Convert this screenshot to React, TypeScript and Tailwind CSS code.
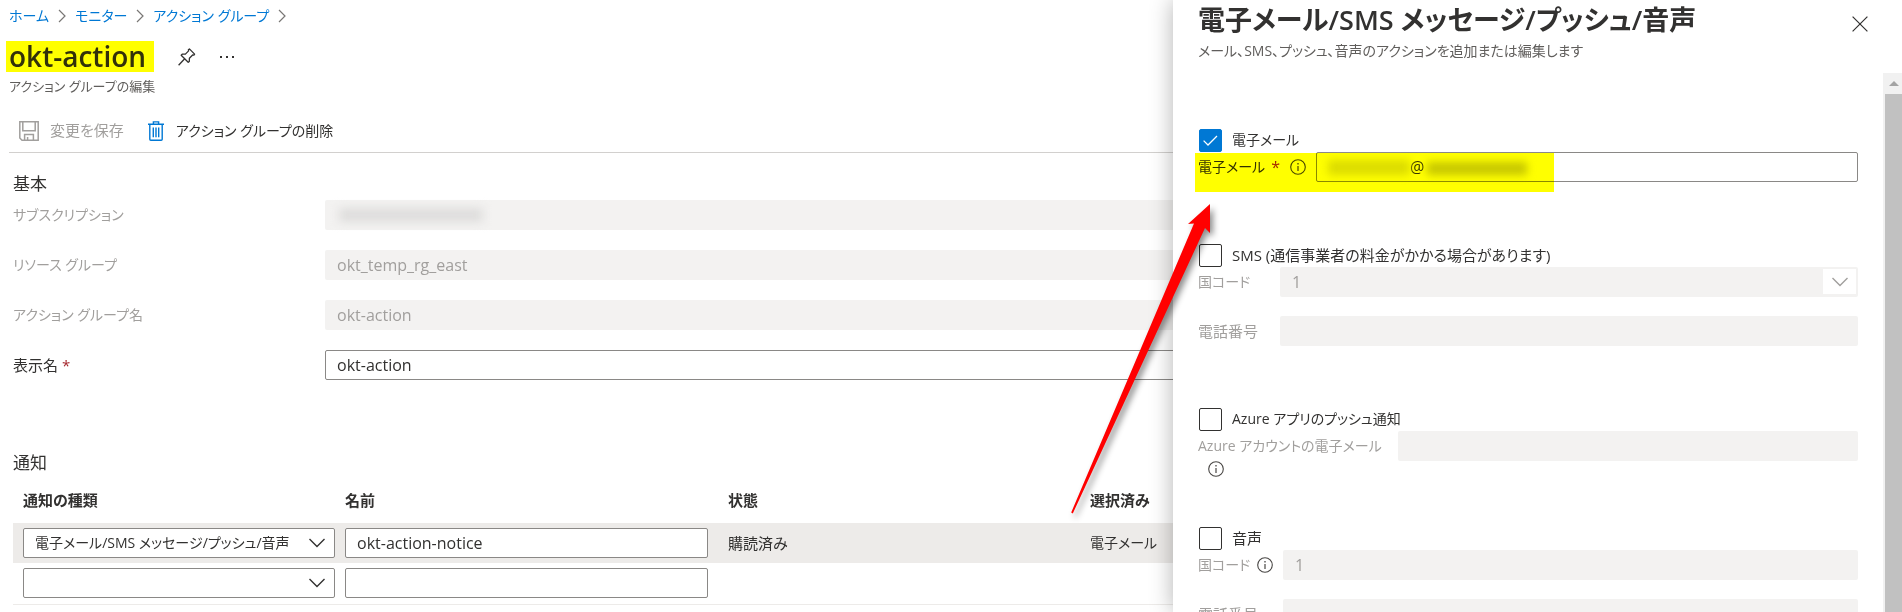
import type { ReactNode } from "react";

const fontStack =
  "font-['Open_Sans','Noto_Sans_CJK_JP',sans-serif] [font-feature-settings:'palt']";

const disabledField =
  "h-[30px] w-full rounded-xs bg-[#f3f2f1] px-3 text-base text-[#a19f9d] outline-none";
const activeField =
  "h-[30px] w-full rounded-xs border border-[#8a8886] bg-white px-[11px] text-base text-[#323130] outline-none";

function Chevron({ className }: { className: string }) {
  return (
    <svg viewBox="0 0 16 10" fill="none" stroke="currentColor" className={className} aria-hidden="true">
      <path d="M0.5 1 8 8.5 15.5 1" strokeWidth="1.4" />
    </svg>
  );
}

function CrumbArrow() {
  return (
    <svg width="8" height="14" viewBox="0 0 8 14" fill="none" stroke="#797775" aria-hidden="true">
      <path d="M1 1 7 7 1 13" strokeWidth="1.2" />
    </svg>
  );
}

function InfoIcon({ className = "" }: { className?: string }) {
  return (
    <svg
      width="16"
      height="16"
      viewBox="0 0 16 16"
      fill="none"
      stroke="#484644"
      className={`shrink-0 ${className}`}
      aria-hidden="true"
    >
      <circle cx="8" cy="8" r="7.3" strokeWidth="1.1" />
      <path d="M8 7v5" strokeWidth="1.2" />
      <path d="M8 4v1.4" strokeWidth="1.3" />
    </svg>
  );
}

function PinIcon() {
  return (
    <svg width="18" height="18" viewBox="0 0 18 18" fill="none" stroke="#323130" strokeWidth="1.3" aria-hidden="true">
      <path
        d="M11.4.9 16.6 6.1 15.9 7.2 14.6 7 11.4 10.2 11.3 13.4 10.2 14.3 3.2 7.3 4.2 6.2 7.4 6.1 10.6 2.9 10.4 1.7Z"
        strokeLinejoin="round"
      />
      <path d="M6.7 10.8.6 17.2" />
    </svg>
  );
}

function SaveIcon() {
  return (
    <svg width="20" height="20" viewBox="0 0 20 20" fill="none" stroke="#a19f9d" strokeWidth="1.5" aria-hidden="true">
      <path d="M.8.8h18.4v18.4H3L.8 17Z" />
      <path d="M3.8.8v9h12.4v-9M5.6 19v-5.6h8.8V19M8.6 19v-3" />
    </svg>
  );
}

function TrashIcon() {
  return (
    <svg width="16" height="20" viewBox="0 0 16 20" fill="none" stroke="#0078d4" strokeWidth="1.4" aria-hidden="true">
      <path d="M0 3.2h16M5.4 3V.9h5.2V3M1.8 3.4v14.8q0 1 1 1h10.4q1 0 1-1V3.4" />
      <path d="M5.3 6.4v9.8M8 6.4v9.8M10.7 6.4v9.8" />
    </svg>
  );
}

function FormRow({ id, label, muted, children }: { id: string; label: ReactNode; muted?: boolean; children: ReactNode }) {
  return (
    <div className="flex items-center">
      <label
        htmlFor={id}
        className={`w-[312px] shrink-0 leading-5 ${muted ? "text-sm text-[#a19f9d]" : "text-[15px] text-[#323130]"}`}
      >
        {label}
      </label>
      <div className="relative min-w-0 flex-1">{children}</div>
    </div>
  );
}

function Check({ id, label, wide, checked }: { id: string; label: string; wide?: boolean; checked?: boolean }) {
  return (
    <div className="flex h-[23px] items-center pl-px">
      <span className="relative flex size-[23px] shrink-0">
        <input
          id={id}
          type="checkbox"
          defaultChecked={checked}
          className="peer size-[23px] appearance-none rounded-xs border border-[#323130] bg-white checked:border-[#0078d4] checked:bg-[#0078d4]"
        />
        <svg
          viewBox="0 0 23 23"
          fill="none"
          stroke="#fff"
          strokeWidth="1.3"
          className="pointer-events-none absolute inset-0 hidden peer-checked:block"
          aria-hidden="true"
        >
          <path d="M4.6 11.6 9 16 18 7" />
        </svg>
      </span>
      <label
        htmlFor={id}
        className={`pb-[2px] pl-[10px] leading-5 whitespace-nowrap text-[#323130] ${wide ? "text-[15px]" : "text-sm"}`}
      >
        {label}
      </label>
    </div>
  );
}

function TypeSelect({ label, value }: { label: string; value: string }) {
  return (
    <div className="relative text-[#323130]">
      <select
        aria-label={label}
        defaultValue={value}
        className="block h-[30px] w-full appearance-none rounded-xs border border-[#8a8886] bg-white pr-9 pl-[11px] text-sm outline-none"
      >
        <option value={value}>{value}</option>
      </select>
      <Chevron className="pointer-events-none absolute top-[10px] right-[10px] h-[10px] w-4" />
    </div>
  );
}

function MainPane() {
  return (
    <main className="min-w-0 flex-1 overflow-hidden pl-[9px]">
      <nav aria-label="階層リンク" className="flex h-8 items-center gap-[9px] text-sm text-[#0078d4]">
        <a href="#home">ホーム</a>
        <CrumbArrow />
        <a href="#monitor">モニター</a>
        <CrumbArrow />
        <a href="#groups">アクション グループ</a>
        <CrumbArrow />
      </nav>

      <header className="pt-[9px]">
        <div className="flex items-center">
          <h1 className="-ml-[3px] flex h-[31px] items-center bg-[#ffff00] pr-2 pb-[2px] pl-[3px] text-[28px] leading-none font-semibold text-[#32310a]">
            okt-action
          </h1>
          <button type="button" aria-label="ピン留め" className="ml-6">
            <PinIcon />
          </button>
          <button type="button" aria-label="その他" className="ml-6 flex gap-1">
            <span className="size-[2px] bg-[#323130]" />
            <span className="size-[2px] bg-[#323130]" />
            <span className="size-[2px] bg-[#323130]" />
          </button>
        </div>
        <p className="pt-1 text-[13px] leading-5 text-[#605e5c]">アクション グループの編集</p>
      </header>

      <div className="mt-[15px] flex h-[42px] items-center border-b border-[#d2d0ce] pb-[2px] pl-[10px]">
        <button type="button" disabled className="flex items-center gap-[11px] text-[15px] text-[#a19f9d]">
          <SaveIcon />
          変更を保存
        </button>
        <button type="button" className="ml-6 flex items-center gap-3 text-sm text-[#323130]">
          <TrashIcon />
          アクション グループの削除
        </button>
      </div>

      <section className="-mr-2 pt-[19px] pl-1">
        <h2 className="pb-1 text-[17px] leading-6 text-[#323130]">基本</h2>
        <div className="flex flex-col gap-5">
          <FormRow id="subscription" label="サブスクリプション" muted>
            <input id="subscription" disabled className={`block ${disabledField}`} />
            <span className="absolute top-2 left-[14px] h-[14px] w-36 bg-[#dedddc] blur-[5px]" />
          </FormRow>
          <FormRow id="resource-group" label="リソース グループ" muted>
            <input id="resource-group" disabled defaultValue="okt_temp_rg_east" className={`block ${disabledField}`} />
          </FormRow>
          <FormRow id="group-name" label="アクション グループ名" muted>
            <input id="group-name" disabled defaultValue="okt-action" className={`block ${disabledField}`} />
          </FormRow>
          <FormRow
            id="display-name"
            label={
              <>
                表示名 <span className="text-[#a4262c]">*</span>
              </>
            }
          >
            <input id="display-name" defaultValue="okt-action" className={`block ${activeField}`} />
          </FormRow>
        </div>
      </section>

      <section className="-mr-2 pt-[71px] pl-1">
        <h2 className="text-[17px] leading-6 text-[#323130]">通知</h2>
        <table className="mt-2 w-full table-fixed border-collapse text-left text-[15px] text-[#323130]">
          <colgroup>
            <col className="w-[327px]" />
            <col className="w-[373px]" />
            <col className="w-[362px]" />
            <col />
          </colgroup>
          <thead>
            <tr className="h-10 leading-5">
              <th className="pb-[6px] pl-[10px] font-semibold">通知の種類</th>
              <th className="pb-[6px] pl-[5px] font-semibold">名前</th>
              <th className="pb-[6px] pl-[15px] font-semibold">状態</th>
              <th className="pb-[6px] pl-[15px] font-semibold">選択済み</th>
            </tr>
          </thead>
          <tbody>
            <tr className="h-10 bg-[#edebe9]">
              <td className="pr-[5px] pl-[10px]">
                <TypeSelect label="通知の種類 1" value="電子メール/SMS メッセージ/プッシュ/音声" />
              </td>
              <td className="px-[5px]">
                <input aria-label="名前 1" defaultValue="okt-action-notice" className={`block ${activeField}`} />
              </td>
              <td className="pl-[15px]">購読済み</td>
              <td className="pl-[15px] text-sm">電子メール</td>
            </tr>
            <tr className="h-[41px] border-b border-[#edebe9]">
              <td className="pr-[5px] pl-[10px]">
                <TypeSelect label="通知の種類 2" value="" />
              </td>
              <td className="px-[5px]">
                <input aria-label="名前 2" className={`block ${activeField}`} />
              </td>
              <td />
              <td />
            </tr>
          </tbody>
        </table>
      </section>
    </main>
  );
}

function Scrollbar() {
  return (
    <div className="flex w-[19px] shrink-0 flex-col bg-[#f1f1f1] pl-[2px]" aria-hidden="true">
      <div className="flex h-[21px] items-center justify-center">
        <svg width="10" height="5" viewBox="0 0 10 5" fill="#a3a3a3">
          <path d="M0 5 5 0 10 5Z" />
        </svg>
      </div>
      <div className="flex-1 bg-[#c1c1c1]" />
    </div>
  );
}

function PointerArrow() {
  return (
    <svg
      width="170"
      height="330"
      viewBox="0 0 170 330"
      className="pointer-events-none absolute top-[200px] -left-[113px] drop-shadow-[3px_4px_3px_rgba(0,0,0,0.45)]"
      aria-hidden="true"
    >
      <path d="M150 4 128 24 134 23.4 11.2 312.6 12.8 313.4 145 28 150 33Z" fill="#ff0000" />
    </svg>
  );
}

function SidePanel() {
  const labelBase = "shrink-0 leading-5 text-[#a19f9d]";
  return (
    <aside className="relative flex w-[729px] shrink-0 flex-col bg-white shadow-[0_0_22px_rgba(0,0,0,0.3)]">
      <header className="flex h-[73px] shrink-0 justify-between pr-[34px] pl-[25px]">
        <div>
          <h2 className="pt-1 text-[27px] leading-8 font-semibold text-[#323130]">
            電子メール/SMS メッセージ/プッシュ/音声
          </h2>
          <p className="pt-[5px] text-sm leading-5 text-[#605e5c]">
            メール、SMS、プッシュ、音声のアクションを追加または編集します
          </p>
        </div>
        <button type="button" aria-label="閉じる" className="mt-4 h-4">
          <svg width="16" height="16" viewBox="0 0 16 16" fill="none" stroke="#323130" strokeWidth="1.2">
            <path d="M.6.6 15.4 15.4M15.4.6.6 15.4" />
          </svg>
        </button>
      </header>

      <div className="flex min-h-0 flex-1">
        <form className="flex min-w-0 flex-1 flex-col gap-[62px] overflow-hidden pt-14 pr-[25px] pl-[25px]">
          <div className="shrink-0">
            <Check id="use-email" label="電子メール" checked />
            <div className="relative flex">
              <label htmlFor="email" className="flex w-[118px] shrink-0 items-center text-sm leading-5 text-[#323130]">
                電子メール
                <span className="pl-[6px] text-base text-[#a4262c]">*</span>
                <InfoIcon className="mr-[10px] ml-auto" />
              </label>
              <div className="relative min-w-0 flex-1">
                <input id="email" defaultValue="@" className={`block pl-[93px]! ${activeField}`} />
                <span className="absolute top-2 left-3 h-[15px] w-[82px] bg-[#dcdcdc] blur-[4px]" />
                <span className="absolute top-[10px] left-[111px] h-[13px] w-[100px] bg-[#c6c6c6] blur-[4px]" />
              </div>
              <span className="pointer-events-none absolute top-px -left-[3px] h-[39px] w-[359px] bg-[#ffff00] mix-blend-multiply" />
            </div>
          </div>

          <div className="shrink-0">
            <Check id="use-sms" label="SMS (通信事業者の料金がかかる場合があります)" wide />
            <div className="flex items-center">
              <label htmlFor="sms-country" className={`w-[82px] text-sm ${labelBase}`}>
                国コード
              </label>
              <div className="relative min-w-0 flex-1">
                <select id="sms-country" disabled className={`block appearance-none opacity-100 ${disabledField}`}>
                  <option>1</option>
                </select>
                <span className="pointer-events-none absolute top-[2px] right-[2px] flex h-[25px] w-[33px] items-center justify-center bg-white text-[#a19f9d]">
                  <Chevron className="h-[10px] w-4" />
                </span>
              </div>
            </div>
            <div className="flex items-center pt-[19px]">
              <label htmlFor="sms-phone" className={`w-[82px] text-[15px] ${labelBase}`}>
                電話番号
              </label>
              <input id="sms-phone" disabled className={`min-w-0 flex-1 ${disabledField}`} />
            </div>
          </div>

          <div className="shrink-0">
            <Check id="use-push" label="Azure アプリのプッシュ通知" />
            <div className="flex">
              <label htmlFor="push-account" className={`h-[34px] w-[200px] pt-[5px] text-sm ${labelBase}`}>
                <span className="block">Azure アカウントの電子メール</span>
                <InfoIcon className="mt-[5px] ml-[10px]" />
              </label>
              <input id="push-account" disabled className={`min-w-0 flex-1 ${disabledField}`} />
            </div>
          </div>

          <div className="shrink-0">
            <Check id="use-voice" label="音声" wide />
            <div className="flex items-center">
              <label
                htmlFor="voice-country"
                className={`flex w-[85px] items-center justify-between pr-[10px] text-sm ${labelBase}`}
              >
                国コード
                <InfoIcon />
              </label>
              <input id="voice-country" disabled defaultValue="1" className={`min-w-0 flex-1 ${disabledField}`} />
            </div>
            <div className="flex items-center pt-[19px]">
              <label htmlFor="voice-phone" className={`w-[85px] text-[15px] ${labelBase}`}>
                電話番号
              </label>
              <input id="voice-phone" disabled className={`min-w-0 flex-1 ${disabledField}`} />
            </div>
          </div>
        </form>
        <Scrollbar />
      </div>

      <PointerArrow />
    </aside>
  );
}

export default function App() {
  return (
    <div lang="ja" className={`flex h-screen overflow-hidden bg-white ${fontStack}`}>
      <MainPane />
      <SidePanel />
    </div>
  );
}
